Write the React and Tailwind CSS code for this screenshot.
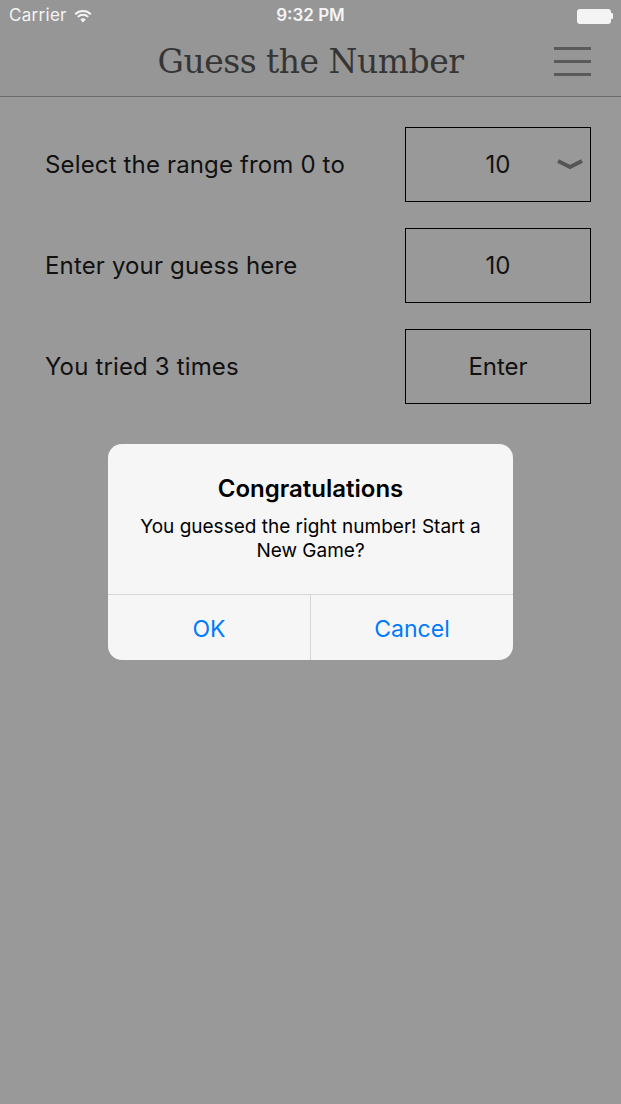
import React from 'react'

const sans = { fontFamily: 'Inter, "Liberation Sans", Arial, sans-serif' }

function Wifi() {
  return (
    <svg width="18" height="13" viewBox="0 0 18 13" className="ml-[7px]">
      <path d="M9 12.5 L6.3 9.4 A4 4 0 0 1 11.7 9.4 Z" fill="#f4f4f4" />
      <path d="M3.8 6.9 A7.4 7.4 0 0 1 14.2 6.9" stroke="#f4f4f4" strokeWidth="2" fill="none" />
      <path d="M1.2 4.2 A11.2 11.2 0 0 1 16.8 4.2" stroke="#f4f4f4" strokeWidth="2" fill="none" />
    </svg>
  )
}

function Row({ label, children }) {
  return (
    <div className="flex items-center justify-between h-[75px]">
      <span className="text-[24px] tracking-[0.15px] text-[#111]">{label}</span>
      <div className="relative w-[186px] h-[75px] border-[1.5px] border-black flex items-center justify-center text-[24px] text-[#111]">
        {children}
      </div>
    </div>
  )
}

export default function App() {
  return (
    <div className="relative w-[621px] h-[1104px] bg-[#999999] overflow-hidden" style={sans}>
      {/* status bar + nav */}
      <div className="bg-[#969696] border-b border-[#6c6c6c]">
        <div className="relative h-[32px] flex items-center px-[9px] text-[17px] text-[#f4f4f4]">
          <span className="tracking-[0.3px]">Carrier</span>
          <Wifi />
          <span className="absolute left-0 right-0 text-center font-semibold">9:32 PM</span>
          <div className="ml-auto mr-[-1px] flex items-center">
            <div className="w-[34px] h-[15px] bg-[#f4f4f4] rounded-[3px]" />
            <div className="w-[2px] h-[6px] bg-[#f4f4f4] rounded-r-[1px]" />
          </div>
        </div>
        <div className="relative h-[64px] flex items-center justify-center">
          <h1
            className="text-[33px] text-[#353535] tracking-[-0.5px] mt-[-4px]"
            style={{ fontFamily: '"DejaVu Serif", "Liberation Serif", serif' }}
          >
            Guess the Number
          </h1>
          <div className="absolute right-[30px] top-[15px] flex flex-col gap-[10px]">
            <div className="w-[37px] h-[3px] bg-[#5a5a5a]" />
            <div className="w-[37px] h-[3px] bg-[#5a5a5a]" />
            <div className="w-[37px] h-[3px] bg-[#5a5a5a]" />
          </div>
        </div>
      </div>

      {/* form */}
      <div className="pl-[45px] pr-[30px] pt-[30px] flex flex-col gap-[26px]">
        <Row label="Select the range from 0 to">
          <span>10</span>
          <svg width="28" height="13" viewBox="0 0 28 13" className="absolute right-[6px] top-[30px]">
            <path d="M2 3 L14 9 L26 3" stroke="#555" strokeWidth="4" fill="none" strokeLinejoin="round" />
          </svg>
        </Row>
        <Row label="Enter your guess here">
          <span>10</span>
        </Row>
        <Row label="You tried 3 times">
          <span>Enter</span>
        </Row>
      </div>

      {/* alert */}
      <div className="absolute left-[108px] top-[444px] w-[405px] rounded-[14px] bg-[#f6f6f6] overflow-hidden">
        <div className="h-[150px] px-[16px] pt-[29px] text-center text-black">
          <div className="text-[24px] font-semibold leading-[32px]">Congratulations</div>
          <div className="mt-[10px] text-[19px] leading-[24px]">
            You guessed the right number! Start a
            <br />
            New Game?
          </div>
        </div>
        <div className="flex border-t border-[#d6d6d6] h-[66px] text-[23px] text-[#007aff]">
          <div className="flex-1 flex items-center justify-center pt-[4px] border-r border-[#d6d6d6]">OK</div>
          <div className="flex-1 flex items-center justify-center pt-[4px]">Cancel</div>
        </div>
      </div>
    </div>
  )
}
